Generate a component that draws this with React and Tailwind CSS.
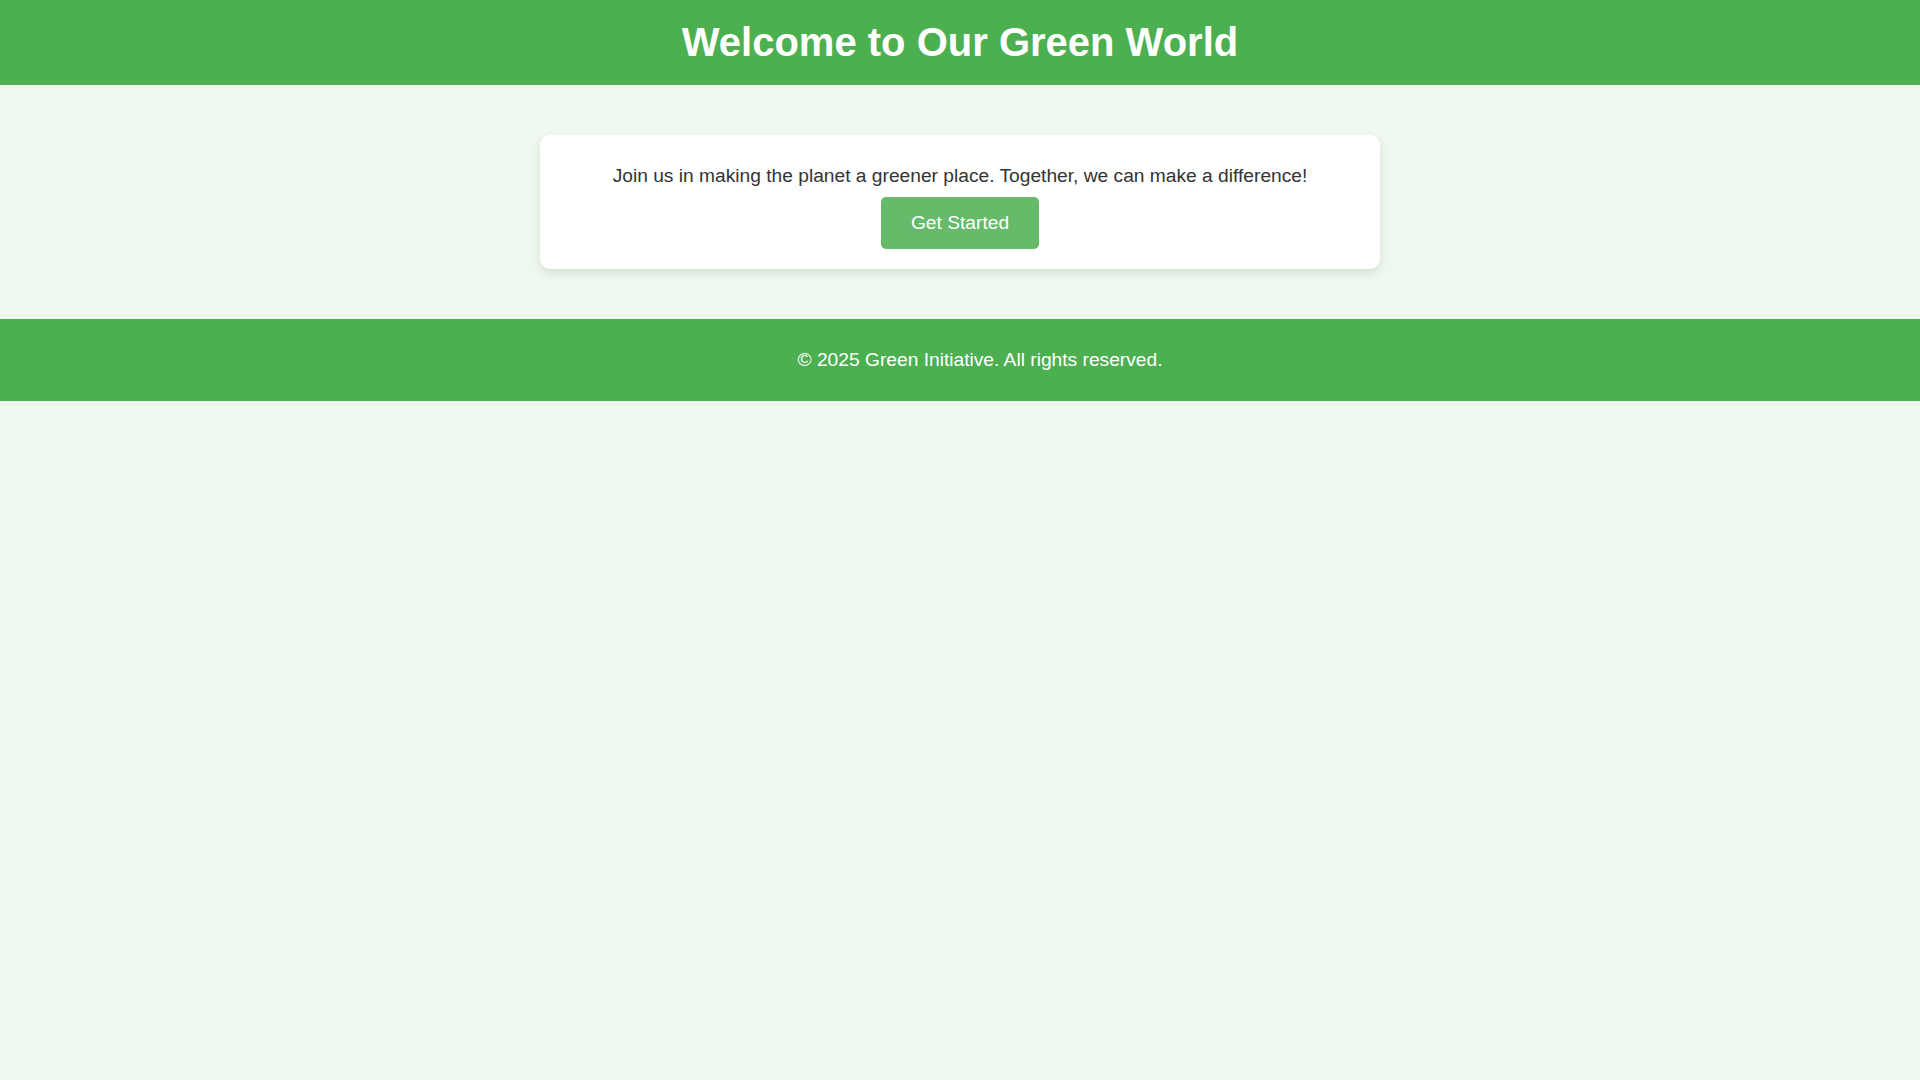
import React, { useEffect } from 'react';

// 전체 페이지 배경
const PAGE_BG = 'bg-[#eef8ee]';

function App() {
  useEffect(() => {
    document.body.className = 'bg-[#eef8ee]';
  }, []);

  return (
    <div className={`${PAGE_BG} font-['Liberation_Sans',Arial,sans-serif]`}>
      {/* 헤더 */}
      <header className="bg-[#4caf50] py-5 text-center text-white">
        <h1 className="m-0 text-[40px] leading-[45px] font-bold">Welcome to Our Green World</h1>
      </header>

      {/* 본문 카드 */}
      <main className="py-[50px]">
        <section className="mx-auto w-[800px] box-content rounded-[10px] bg-white p-5 text-center shadow-[0_4px_10px_rgba(0,0,0,0.1)]">
          <p className="my-[10px] text-[19.2px] leading-[22px] text-[#333]">
            Join us in making the planet a greener place. Together, we can make a difference!
          </p>
          <button className="cursor-pointer rounded-[5px] bg-[#66bb6a] px-[30px] py-[15px] text-[19.2px] leading-[22px] text-white">
            Get Started
          </button>
        </section>
      </main>

      {/* 푸터 */}
      <footer className="box-content w-full bg-[#4caf50] px-5 py-[30px] text-center text-[19.2px] leading-[22px] text-white">
        © 2025 Green Initiative. All rights reserved.
      </footer>
    </div>
  );
}

export default App;
